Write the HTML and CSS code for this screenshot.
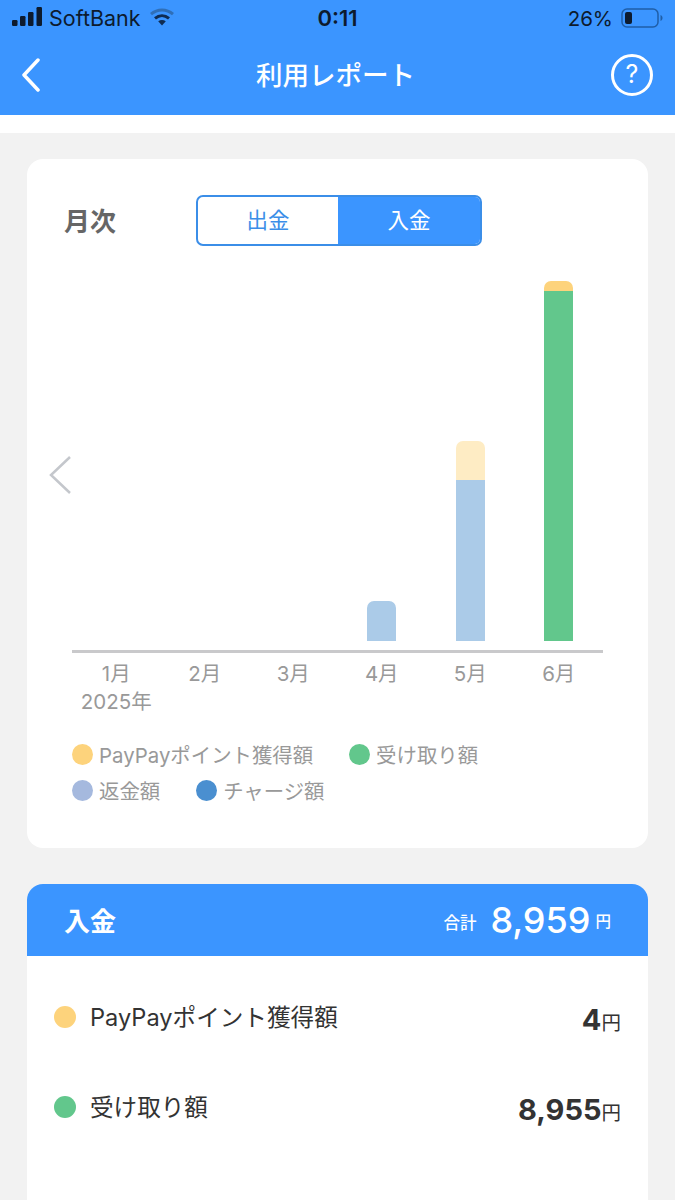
FILE: index.html
```html
<!DOCTYPE html>
<html lang="ja">
<head>
    <meta charset="UTF-8">
    <title>利用レポート</title>
    <link rel="stylesheet" href="styles.css">
</head>
<body>
    <header class="header">
        <div class="status">
            <div class="status-left">
                <svg class="signal" width="31" height="19" viewBox="0 0 31 19">
                    <rect x="0" y="13" width="5.500" height="6" rx="1.200"/>
                    <rect x="8" y="9" width="5.500" height="10" rx="1.200"/>
                    <rect x="16" y="5" width="5.500" height="14" rx="1.200"/>
                    <rect x="24.500" y="0" width="5.500" height="19" rx="1.200"/>
                </svg>
                <span>SoftBank</span>
                <svg class="wifi" width="24" height="18" viewBox="0 0 24 18">
                    <path d="M1 6.200C7.400 .6 16.600 .6 23 6.200" fill="none" stroke="#2f6fb8" stroke-width="3"/>
                    <path d="M5 10.400c4.200-3.600 9.800-3.600 14 0" fill="none" stroke="#0f2c52" stroke-width="3"/>
                    <path d="M8.200 13.200c2.400-1.700 5.200-1.700 7.600 0L12 17.600z" fill="#0f2c52"/>
                </svg>
            </div>
            <div class="status-time">0:11</div>
            <div class="status-right">
                <span>26%</span>
                <svg width="42" height="20" viewBox="0 0 42 20">
                    <rect x="1" y="1" width="36" height="18" rx="5" fill="none" stroke="#1f5ea8" stroke-width="1.500"/>
                    <rect x="4" y="4" width="7" height="12" rx="2" fill="#0d1b2e"/>
                    <path d="M39.500 7c1.400.5 2 1.600 2 3s-.6 2.500-2 3z" fill="#1f5ea8"/>
                </svg>
            </div>
        </div>
        <div class="nav">
            <svg class="back" width="20" height="34" viewBox="0 0 20 34">
                <path d="M17 2 3 17l14 15" fill="none" stroke="#fff" stroke-width="3.500" stroke-linecap="round" stroke-linejoin="round"/>
            </svg>
            <h1>利用レポート</h1>
            <div class="help">?</div>
        </div>
    </header>
    <div class="strip"></div>

    <main class="content">
        <section class="card chart-card">
            <div class="chart-top">
                <h2>月次</h2>
                <div class="toggle">
                    <div class="toggle-item">出金</div>
                    <div class="toggle-item active">入金</div>
                </div>
            </div>

            <svg class="prev" width="24" height="40" viewBox="0 0 24 40">
                <path d="M22 2 3 20l19 18" fill="none" stroke="#c4c7cc" stroke-width="2.500"/>
            </svg>

            <div class="bars">
                <div class="bar-col"></div>
                <div class="bar-col"></div>
                <div class="bar-col"></div>
                <div class="bar-col">
                    <div class="bar">
                        <div class="seg refund" style="height: 40px"></div>
                    </div>
                </div>
                <div class="bar-col">
                    <div class="bar">
                        <div class="seg point-light" style="height: 39px"></div>
                        <div class="seg refund" style="height: 161px"></div>
                    </div>
                </div>
                <div class="bar-col">
                    <div class="bar">
                        <div class="seg point" style="height: 10px"></div>
                        <div class="seg received" style="height: 350px"></div>
                    </div>
                </div>
            </div>
            <div class="axis"></div>
            <div class="months">
                <div class="month">1月<br>2025年</div>
                <div class="month">2月</div>
                <div class="month">3月</div>
                <div class="month">4月</div>
                <div class="month">5月</div>
                <div class="month">6月</div>
            </div>

            <div class="legend">
                <div class="legend-row">
                    <div class="legend-item"><span class="dot c-point"></span>PayPayポイント獲得額</div>
                    <div class="legend-item"><span class="dot c-received"></span>受け取り額</div>
                </div>
                <div class="legend-row">
                    <div class="legend-item"><span class="dot c-refund"></span>返金額</div>
                    <div class="legend-item"><span class="dot c-charge"></span>チャージ額</div>
                </div>
            </div>
        </section>

        <section class="card detail-card">
            <div class="detail-head">
                <h2>入金</h2>
                <div class="total">
                    <span class="total-label">合計</span>
                    <span class="total-num">8,959</span>
                    <span class="total-yen">円</span>
                </div>
            </div>
            <div class="detail-list">
                <div class="detail-row">
                    <span class="dot dot-big c-point"></span>
                    <span class="detail-name">PayPayポイント獲得額</span>
                    <span class="detail-val"><b>4</b>円</span>
                </div>
                <div class="detail-row">
                    <span class="dot dot-big c-received"></span>
                    <span class="detail-name">受け取り額</span>
                    <span class="detail-val"><b>8,955</b>円</span>
                </div>
            </div>
        </section>
    </main>
</body>
</html>
```

FILE: styles.css
```css
* {
    box-sizing: border-box;
}

html, body {
    margin: 0;
    height: 1200px;
    overflow: hidden;
}

body {
    background-color: #f2f2f2;
    font-family: Inter, "Noto Sans CJK JP", sans-serif;
    color: #333;
}

h1, h2 {
    margin: 0;
}

.header {
    height: 115px;
    background-color: #3b95ff;
}

.status {
    height: 36px;
    padding: 0 12px;
    display: grid;
    grid-template-columns: 1fr auto 1fr;
    align-items: center;
    font-size: 20.500px;
    color: #0d1b2e;
}

.status-left {
    display: flex;
    align-items: center;
    gap: 6px;
}

.status-left span {
    font-size: 21.500px;
}

.signal {
    fill: #0d1b2e;
    margin-top: -3px;
}

.wifi {
    margin-left: 3px;
    margin-top: -2px;
}

.status-time {
    font-weight: 600;
    font-size: 22px;
}

.status-right {
    display: flex;
    justify-content: flex-end;
    align-items: center;
    gap: 8px;
}

.nav {
    height: 79px;
    padding: 0 22px 2px 21px;
    display: flex;
    align-items: center;
    justify-content: space-between;
}

.nav h1 {
    color: #fff;
    font-size: 26.500px;
    font-weight: 500;
    margin-left: 19px;
    margin-bottom: 2px;
}

.help {
    width: 42px;
    height: 42px;
    border: 3px solid #fff;
    border-radius: 50%;
    color: #fff;
    font-size: 25px;
    line-height: 35px;
    text-align: center;
}

.strip {
    height: 18px;
    background-color: #fff;
}

.content {
    padding: 26px 27px 0;
}

.card {
    background-color: #fff;
    border-radius: 16px;
}

.chart-card {
    position: relative;
    height: 689px;
    padding: 36px 45px 0;
    margin-bottom: 36px;
}

.chart-top {
    display: flex;
    align-items: center;
}

.chart-top h2 {
    width: 132px;
    margin-left: -8px;
    margin-top: -2px;
    font-size: 26px;
    font-weight: 700;
    color: #666;
}

.toggle {
    width: 286px;
    height: 51px;
    display: flex;
    border: 2px solid #3b8ee8;
    border-radius: 7px;
    overflow: hidden;
    font-size: 21.500px;
    color: #3b8ee8;
}

.toggle-item {
    flex: 0 0 140px;
    display: flex;
    align-items: center;
    justify-content: center;
    padding-bottom: 5px;
}

.toggle-item.active {
    flex: 1;
    background-color: #3b95ff;
    color: #fff;
}

.prev {
    position: absolute;
    left: 21px;
    top: 296px;
}

.bars {
    height: 360px;
    margin-top: 35px;
    display: flex;
    align-items: flex-end;
}

.bar-col {
    flex: 1;
    display: flex;
    justify-content: center;
}

.bar {
    width: 29px;
    border-radius: 7px 7px 0 0;
    overflow: hidden;
}

.seg.refund {
    background-color: #abcbe8;
}

.seg.point-light {
    background-color: #feecc4;
}

.seg.point {
    background-color: #fdd37c;
}

.seg.received {
    background-color: #62c78c;
}

.axis {
    height: 3px;
    margin-top: 9px;
    background-color: #c9c9cb;
}

.months {
    display: flex;
    margin-top: 7px;
    height: 70px;
    font-size: 20.500px;
    line-height: 28px;
    color: #999;
}

.month {
    flex: 1;
    text-align: center;
}

.legend {
    margin-top: 6px;
    font-size: 20.400px;
    color: #999;
}

.legend-row {
    height: 36px;
    display: flex;
    align-items: center;
    gap: 36px;
}

.legend-item {
    display: flex;
    align-items: center;
    gap: 6px;
}

.dot {
    width: 21px;
    height: 21px;
    border-radius: 50%;
    flex: none;
}

.c-point {
    background-color: #fdd37c;
}

.c-received {
    background-color: #62c78c;
}

.c-refund {
    background-color: #a5b9de;
}

.c-charge {
    background-color: #4a8fd0;
}

.detail-card {
    height: 316px;
    border-radius: 16px 16px 0 0;
}

.detail-head {
    height: 72px;
    padding: 0 37px;
    display: flex;
    align-items: center;
    justify-content: space-between;
    background-color: #3b95ff;
    border-radius: 16px 16px 0 0;
    color: #fff;
}

.detail-head h2 {
    font-size: 26px;
    font-weight: 700;
    margin-bottom: 2px;
}

.total {
    display: flex;
    align-items: center;
}

.total-label {
    font-size: 16.500px;
    font-weight: 500;
    margin-right: 14px;
    margin-top: 3px;
}

.total-num {
    font-size: 36px;
    font-weight: 500;
    margin-right: 5px;
}

.total-yen {
    font-size: 15.500px;
    font-weight: 500;
}

.detail-list {
    padding-top: 16px;
}

.detail-row {
    height: 90px;
    padding: 0 27px;
    display: flex;
    align-items: center;
}

.dot-big {
    width: 22px;
    height: 22px;
    margin-right: 14px;
}

.detail-name {
    flex: 1;
    font-size: 23.600px;
    margin-bottom: 2px;
}

.detail-val {
    font-size: 19.500px;
    margin-top: 4px;
}

.detail-val b {
    font-size: 29px;
    font-weight: 700;
}
```
